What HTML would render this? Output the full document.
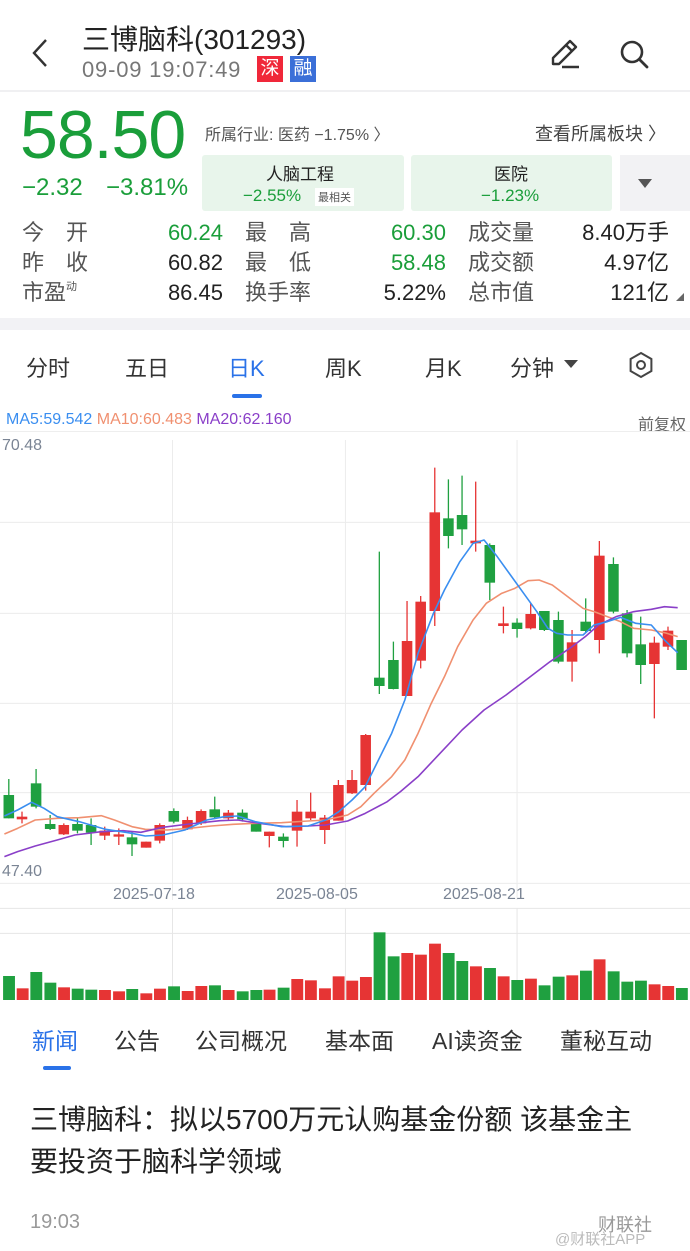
<!DOCTYPE html>
<html><head><meta charset="utf-8"><style>
*{margin:0;padding:0;box-sizing:border-box}
body{width:690px;height:1251px;background:#fff;font-family:"Liberation Sans","Noto Sans CJK SC",sans-serif;position:relative;overflow:hidden;color:#222}
.a{position:absolute;white-space:nowrap}
.g{color:#1a9e3a}
.gr{color:#555}
</style></head><body>
<!-- header -->
<svg class="a" style="left:30px;top:38px" width="20" height="30" viewBox="0 0 20 30"><path d="M16 2 L4 15 L16 28" fill="none" stroke="#333" stroke-width="2.4"/></svg>
<div class="a" style="left:82px;top:18px;font-size:28px;color:#222">三博脑科(301293)</div>
<div class="a" style="left:82px;top:57px;font-size:22px;letter-spacing:0.8px;color:#777">09-09 19:07:49</div>
<div class="a" style="left:257px;top:56px;width:26px;height:26px;background:#f0283a;color:#fff;font-size:19px;text-align:center;line-height:26px">深</div>
<div class="a" style="left:290px;top:56px;width:26px;height:26px;background:#3b6fd8;color:#fff;font-size:19px;text-align:center;line-height:26px">融</div>
<svg class="a" style="left:548px;top:36px" width="36" height="36" viewBox="0 0 36 36"><path d="M5 28 L5 22 L22 5 L28 11 L11 28 Z M18 9 L24 15" fill="none" stroke="#333" stroke-width="2.4" stroke-linejoin="round"/><path d="M14 31 L31 31" stroke="#333" stroke-width="2.4"/></svg>
<svg class="a" style="left:616px;top:36px" width="36" height="36" viewBox="0 0 36 36"><circle cx="16" cy="16" r="10" fill="none" stroke="#333" stroke-width="2.6"/><path d="M23.5 23.5 L31 31" stroke="#333" stroke-width="2.8" stroke-linecap="round"/></svg>
<div class="a" style="left:0;top:90px;width:690px;height:2px;background:#f0f0f2"></div>
<!-- price -->
<div class="a g" style="left:20px;top:96px;font-size:68px;letter-spacing:-1px">58.50</div>
<div class="a g" style="left:22px;top:174px;font-size:24px">−2.32</div>
<div class="a g" style="left:106px;top:174px;font-size:24px">−3.81%</div>
<div class="a" style="left:205px;top:121px;font-size:16px;color:#555">所属行业: 医药 −1.75% 〉</div>
<div class="a" style="left:535px;top:120px;font-size:18px;color:#444">查看所属板块 〉</div>
<div class="a" style="left:202px;top:155px;width:202px;height:56px;background:#e8f5eb;border-radius:3px"></div>
<div class="a" style="left:266px;top:160px;font-size:17px;color:#222">人脑工程</div>
<div class="a g" style="left:243px;top:186px;font-size:17px">−2.55%</div>
<div class="a" style="left:315px;top:188px;font-size:11px;color:#555;background:#fff;padding:1px 3px">最相关</div>
<div class="a" style="left:411px;top:155px;width:201px;height:56px;background:#e8f5eb;border-radius:3px"></div>
<div class="a" style="left:494px;top:160px;font-size:17px;color:#222">医院</div>
<div class="a g" style="left:481px;top:186px;font-size:17px">−1.23%</div>
<div class="a" style="left:620px;top:155px;width:70px;height:56px;background:#f2f2f4"></div>
<svg class="a" style="left:637px;top:177px" width="16" height="12"><path d="M1 2 L15 2 L8 11 Z" fill="#555"/></svg>
<div class="a" style="left:22px;top:218px;font-size:22px;line-height:30px;color:#555">今　开<br>昨　收<br>市盈<span style="font-size:11px;position:relative;top:-10px">动</span></div>
<div class="a" style="left:140px;top:218px;font-size:22px;line-height:30px;text-align:right;width:83px"><span class="g">60.24</span><br>60.82<br>86.45</div>
<div class="a" style="left:245px;top:218px;font-size:22px;line-height:30px;color:#555">最　高<br>最　低<br>换手率</div>
<div class="a" style="left:350px;top:218px;font-size:22px;line-height:30px;text-align:right;width:96px"><span class="g">60.30</span><br><span class="g">58.48</span><br>5.22%</div>
<div class="a" style="left:468px;top:218px;font-size:22px;line-height:30px;color:#555">成交量<br>成交额<br>总市值</div>
<div class="a" style="left:550px;top:218px;font-size:22px;line-height:30px;text-align:right;width:119px">8.40万手<br>4.97亿<br>121亿</div>
<svg class="a" style="left:676px;top:293px" width="8" height="8"><path d="M8 0 L8 8 L0 8 Z" fill="#666"/></svg>
<div class="a" style="left:0;top:318px;width:690px;height:12px;background:#f2f2f5"></div>
<!-- tabs -->
<div class="a" style="left:26px;top:351px;font-size:22px;color:#333">分时</div>
<div class="a" style="left:125px;top:351px;font-size:22px;color:#333">五日</div>
<div class="a" style="left:228px;top:351px;font-size:22px;color:#2a72e8">日K</div>
<div class="a" style="left:232px;top:394px;width:30px;height:4px;background:#2a72e8;border-radius:2px"></div>
<div class="a" style="left:325px;top:351px;font-size:22px;color:#333">周K</div>
<div class="a" style="left:425px;top:351px;font-size:22px;color:#333">月K</div>
<div class="a" style="left:510px;top:351px;font-size:22px;color:#333">分钟</div>
<svg class="a" style="left:564px;top:359px" width="14" height="10"><path d="M0 1 L14 1 L7 9 Z" fill="#444"/></svg>
<svg class="a" style="left:627px;top:351px" width="28" height="28" viewBox="0 0 28 28"><path d="M14 2 L24.4 8 L24.4 20 L14 26 L3.6 20 L3.6 8 Z" fill="none" stroke="#444" stroke-width="2"/><circle cx="14" cy="14" r="4" fill="none" stroke="#444" stroke-width="2"/></svg>
<div class="a" style="left:6px;top:411px;font-size:16px"><span style="color:#3a8ef0">MA5:59.542</span> <span style="color:#f09070">MA10:60.483</span> <span style="color:#8a3fc8">MA20:62.160</span></div>
<div class="a" style="left:638px;top:411px;font-size:16px;color:#666">前复权</div>
<div class="a" style="left:0;top:431px;width:690px;height:1px;background:#eee"></div>
<!-- chart -->
<svg class="a" style="left:0;top:440px" width="690" height="460" viewBox="0 0 1568 1380" preserveAspectRatio="none">
<g stroke="#ececec" stroke-width="1" vector-effect="non-scaling-stroke">
<path d="M0 247H1568M0 520H1568M0 790H1568M0 1058H1568M0 1330H1568M392 -30V1380M785 -30V1380M1175 -30V1380" vector-effect="non-scaling-stroke"/>
</g>
<g stroke-width="1.3">
<g fill="#1fa040" stroke="#1fa040">
<path vector-effect="non-scaling-stroke" d="M20 1017V1135M82 987V1105M114 1125V1170M176 1135V1180M207 1135V1215M300 1175V1248M395 1105V1150M488 1070V1135M551 1108V1145M582 1150V1175M644 1180V1222M862 335V762M894 605V748M1019 118V325M1050 107V315M1113 310V480M1175 535V593M1237 513V573M1269 515V670M1331 475V578M1394 352V520M1425 510V652M1456 530V732M1549 600V690"/>
</g>
<g fill="#e63434" stroke="#e63434">
<path vector-effect="non-scaling-stroke" d="M50 1115V1150M145 1150V1185M238 1160V1200M270 1165V1215M332 1205V1223M363 1150V1210M426 1130V1170M457 1108V1155M519 1110V1140M612 1175V1222M675 1080V1220M706 1058V1140M738 1125V1212M769 1020V1142M800 990V1062M831 882V1052M925 483V768M956 468V685M988 83V558M1081 125V335M1144 500V580M1206 490V568M1300 570V725M1362 303V640M1487 590V835M1518 560V630"/>
</g>
</g>
<g fill="#1fa040">
<rect x="8" y="1065" width="24" height="70"/><rect x="70" y="1030" width="24" height="70"/><rect x="102" y="1152" width="24" height="15"/><rect x="164" y="1152" width="24" height="20"/><rect x="195" y="1155" width="24" height="23"/><rect x="288" y="1192" width="24" height="21"/><rect x="383" y="1113" width="24" height="32"/><rect x="476" y="1108" width="24" height="24"/><rect x="539" y="1118" width="24" height="20"/><rect x="570" y="1150" width="24" height="25"/><rect x="632" y="1190" width="24" height="13"/><rect x="850" y="713" width="24" height="25"/><rect x="882" y="660" width="24" height="87"/><rect x="1007" y="235" width="24" height="53"/><rect x="1038" y="225" width="24" height="43"/><rect x="1101" y="315" width="24" height="113"/><rect x="1163" y="548" width="24" height="19"/><rect x="1225" y="513" width="24" height="57"/><rect x="1257" y="540" width="24" height="125"/><rect x="1319" y="545" width="24" height="28"/><rect x="1382" y="372" width="24" height="143"/><rect x="1413" y="520" width="24" height="120"/><rect x="1444" y="613" width="24" height="62"/><rect x="1537" y="600" width="24" height="90"/>
</g>
<g fill="#e63434">
<rect x="38" y="1130" width="24" height="8"/><rect x="133" y="1155" width="24" height="28"/><rect x="226" y="1172" width="24" height="15"/><rect x="258" y="1183" width="24" height="7"/><rect x="320" y="1205" width="24" height="18"/><rect x="351" y="1155" width="24" height="47"/><rect x="414" y="1140" width="24" height="28"/><rect x="445" y="1113" width="24" height="37"/><rect x="507" y="1118" width="24" height="17"/><rect x="600" y="1175" width="24" height="13"/><rect x="663" y="1115" width="24" height="57"/><rect x="694" y="1115" width="24" height="20"/><rect x="726" y="1133" width="24" height="37"/><rect x="757" y="1035" width="24" height="107"/><rect x="788" y="1020" width="24" height="40"/><rect x="819" y="885" width="24" height="150"/><rect x="913" y="603" width="24" height="165"/><rect x="944" y="485" width="24" height="177"/><rect x="976" y="217" width="24" height="296"/><rect x="1069" y="302" width="24" height="8"/><rect x="1132" y="550" width="24" height="8"/><rect x="1194" y="522" width="24" height="43"/><rect x="1288" y="607" width="24" height="58"/><rect x="1350" y="347" width="24" height="253"/><rect x="1475" y="608" width="24" height="64"/><rect x="1506" y="572" width="24" height="48"/>
</g>
<g fill="none" stroke-width="1.6" stroke-linejoin="round">
<polyline vector-effect="non-scaling-stroke" stroke="#f09070" points="10,1182 40,1165 80,1140 130,1135 180,1133 230,1127 260,1140 300,1160 330,1168 380,1170 430,1165 480,1158 530,1153 580,1150 640,1148 700,1143 740,1140 790,1125 820,1100 850,1060 890,1010 920,960 950,880 980,790 1010,710 1040,620 1075,540 1105,490 1140,460 1170,445 1200,422 1225,420 1255,435 1290,470 1325,505 1350,515 1380,530 1410,545 1440,565 1480,570 1510,578 1540,590"/>
<polyline vector-effect="non-scaling-stroke" stroke="#8a3fc8" points="10,1250 40,1235 80,1218 130,1200 170,1185 230,1175 280,1172 320,1177 370,1162 430,1152 500,1142 540,1140 600,1152 650,1160 700,1158 740,1155 790,1143 830,1120 880,1085 910,1055 950,1010 1000,940 1050,870 1100,810 1150,765 1200,715 1250,665 1300,620 1330,590 1360,555 1400,530 1440,515 1480,508 1510,500 1540,503"/>
<polyline vector-effect="non-scaling-stroke" stroke="#3a8ef0" points="10,1128 40,1110 72,1087 100,1105 130,1130 180,1145 240,1168 300,1180 330,1188 370,1185 420,1170 470,1140 510,1130 540,1128 580,1145 640,1160 700,1158 740,1140 770,1115 800,1080 830,1040 860,960 890,880 920,780 950,640 985,520 1010,450 1045,365 1075,310 1100,300 1130,350 1160,405 1190,460 1220,515 1245,565 1265,580 1290,585 1325,585 1350,555 1380,545 1410,532 1445,550 1480,555 1510,600 1540,638"/>
</g>
</svg>
<div class="a" style="left:2px;top:437px;font-size:16px;color:#7a8494">70.48</div>
<div class="a" style="left:2px;top:863px;font-size:16px;color:#7a8494">47.40</div>
<div class="a" style="left:113px;top:886px;font-size:16px;color:#7a8494">2025-07-18</div>
<div class="a" style="left:276px;top:886px;font-size:16px;color:#7a8494">2025-08-05</div>
<div class="a" style="left:443px;top:886px;font-size:16px;color:#7a8494">2025-08-21</div>
<!-- volume -->
<svg class="a" style="left:0;top:900px" width="690" height="110" viewBox="0 0 1568 330" preserveAspectRatio="none">
<path d="M0 25H1568M0 100H1568M392 25V300M785 25V300M1175 25V300" stroke="#e6e6e6" vector-effect="non-scaling-stroke" fill="none"/>
<g fill="#1fa040">
<rect x="7" y="228" width="27" height="72"/><rect x="69" y="216" width="27" height="84"/><rect x="101" y="248" width="27" height="52"/><rect x="163" y="266" width="27" height="34"/><rect x="194" y="269" width="27" height="31"/><rect x="287" y="267" width="27" height="33"/><rect x="382" y="259" width="27" height="41"/><rect x="475" y="256" width="27" height="44"/><rect x="538" y="274" width="27" height="26"/><rect x="569" y="270" width="27" height="30"/><rect x="631" y="263" width="27" height="37"/><rect x="849" y="97" width="27" height="203"/><rect x="881" y="169" width="27" height="131"/><rect x="1006" y="159" width="27" height="141"/><rect x="1037" y="183" width="27" height="117"/><rect x="1100" y="204" width="27" height="96"/><rect x="1162" y="240" width="27" height="60"/><rect x="1224" y="256" width="27" height="44"/><rect x="1256" y="230" width="27" height="70"/><rect x="1318" y="212" width="27" height="88"/><rect x="1381" y="214" width="27" height="86"/><rect x="1412" y="245" width="27" height="55"/><rect x="1443" y="242" width="27" height="58"/><rect x="1536" y="264" width="27" height="36"/>
</g>
<g fill="#e63434">
<rect x="38" y="265" width="27" height="35"/><rect x="132" y="262" width="27" height="38"/><rect x="225" y="270" width="27" height="30"/><rect x="257" y="274" width="27" height="26"/><rect x="319" y="280" width="27" height="20"/><rect x="350" y="266" width="27" height="34"/><rect x="413" y="273" width="27" height="27"/><rect x="444" y="258" width="27" height="42"/><rect x="506" y="270" width="27" height="30"/><rect x="599" y="269" width="27" height="31"/><rect x="662" y="237" width="27" height="63"/><rect x="693" y="241" width="27" height="59"/><rect x="725" y="265" width="27" height="35"/><rect x="756" y="229" width="27" height="71"/><rect x="787" y="242" width="27" height="58"/><rect x="818" y="231" width="27" height="69"/><rect x="912" y="159" width="27" height="141"/><rect x="943" y="164" width="27" height="136"/><rect x="975" y="131" width="27" height="169"/><rect x="1068" y="199" width="27" height="101"/><rect x="1131" y="229" width="27" height="71"/><rect x="1193" y="236" width="27" height="64"/><rect x="1287" y="226" width="27" height="74"/><rect x="1349" y="178" width="27" height="122"/><rect x="1474" y="253" width="27" height="47"/><rect x="1505" y="258" width="27" height="42"/>
</g>
</svg>
<!-- news tabs -->
<div class="a" style="left:32px;top:1022px;font-size:23px;color:#2a72e8">新闻</div>
<div class="a" style="left:43px;top:1066px;width:28px;height:4px;background:#2a72e8;border-radius:2px"></div>
<div class="a" style="left:114px;top:1022px;font-size:23px;color:#333">公告</div>
<div class="a" style="left:195px;top:1022px;font-size:23px;color:#333">公司概况</div>
<div class="a" style="left:325px;top:1022px;font-size:23px;color:#333">基本面</div>
<div class="a" style="left:432px;top:1022px;font-size:23px;color:#333">AI读资金</div>
<div class="a" style="left:560px;top:1022px;font-size:23px;color:#333">董秘互动</div>
<div class="a" style="left:30px;top:1099px;font-size:28px;line-height:42px;color:#222">三博脑科：拟以5700万元认购基金份额 该基金主<br>要投资于脑科学领域</div>
<div class="a" style="left:30px;top:1211px;font-size:20px;color:#999">19:03</div>
<div class="a" style="left:598px;top:1211px;font-size:18px;color:#999">财联社</div>
<div class="a" style="left:555px;top:1228px;font-size:15px;color:#bbb">@财联社APP</div>
</body></html>
